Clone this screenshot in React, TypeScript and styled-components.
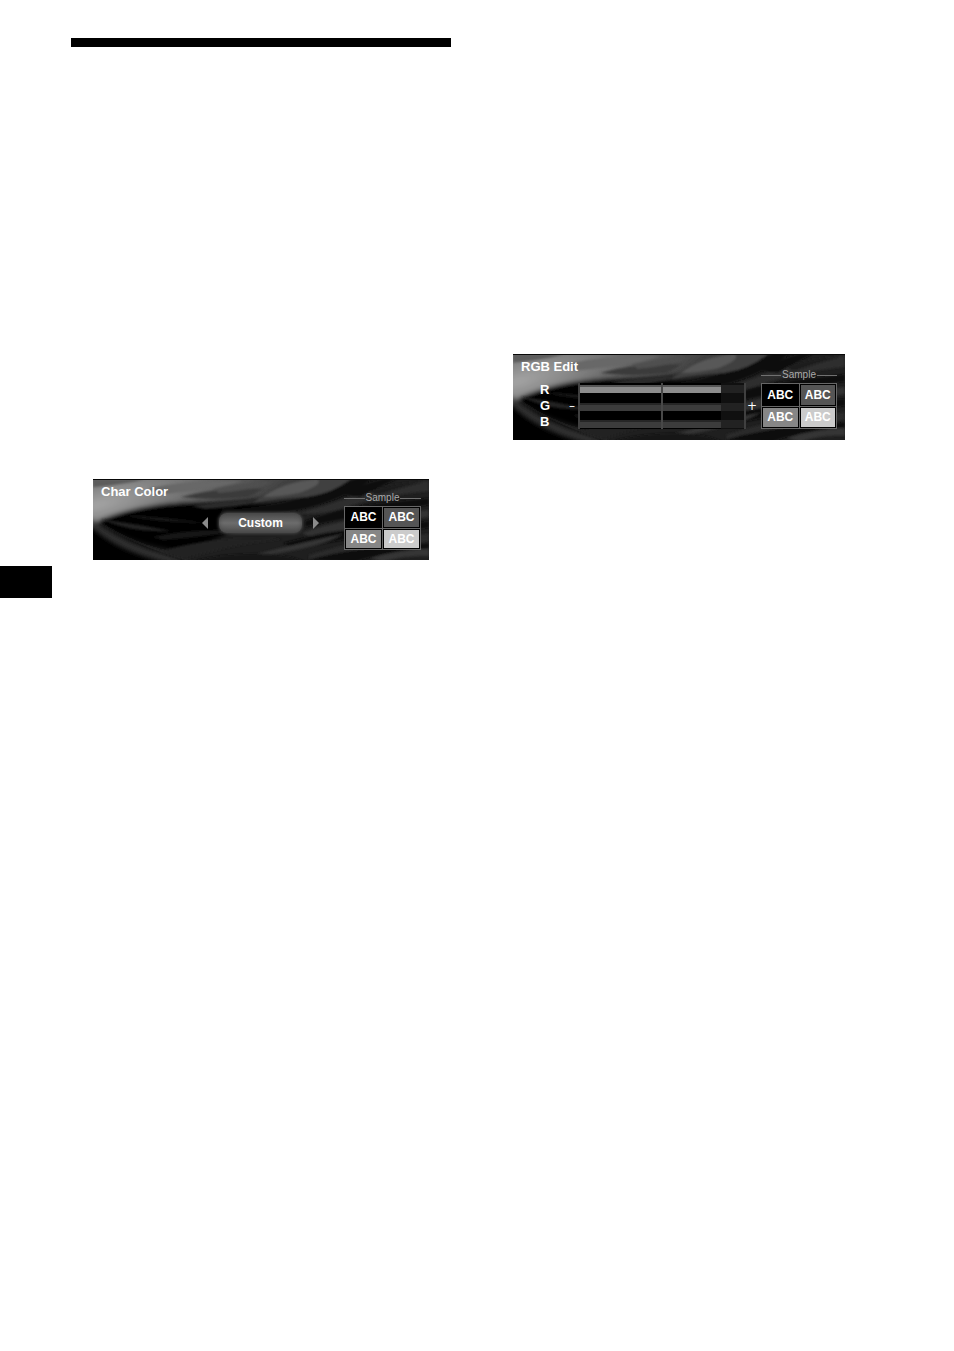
import React, { useState } from 'react';
import styled, { createGlobalStyle } from 'styled-components';

const GlobalStyle = createGlobalStyle`
  * { box-sizing: border-box; }
  body { margin: 0; background: #fff; }
`;

const Page = styled.main`
  display: grid;
  grid-template-columns: 71px minmax(0, 1fr) minmax(0, 1fr);
  padding-right: 83px;
  min-height: 100vh;
  align-items: start;
`;

const PageTab = styled.div`
  width: 52px;
  height: 32px;
  margin-top: 566px;
  background: #000;
`;

const LeftColumn = styled.section`
  padding-top: 38px;
  margin-right: 20px;
`;

const RightColumn = styled.section`
  padding-top: 354px;
  margin-left: 20px;
`;

const Rule = styled.hr`
  height: 9px;
  margin: 0 0 432px;
  border: 0;
  background: #000;
`;

const Panel = styled.form<{ $height: number; $inset: number }>`
  position: relative;
  display: flex;
  justify-content: space-between;
  height: ${(p) => p.$height}px;
  margin: 0 ${(p) => p.$inset}px 0 22px;
  padding-right: 8px;
  overflow: hidden;
  background: #0a0a0a;
  color: #fff;
  font-family: 'Liberation Sans', Arial, sans-serif;
`;

const Backdrop = styled.svg`
  position: absolute;
  inset: 0;
  width: 100%;
  height: 100%;
`;

const PanelBody = styled.div`
  position: relative;
  display: flex;
  flex: 1;
  flex-direction: column;
`;

const Title = styled.h2`
  margin: 0;
  padding: 5px 0 0 8px;
  font-size: 13px;
  font-weight: 700;
  line-height: 16px;
`;

const Picker = styled.div`
  display: flex;
  align-items: center;
  align-self: flex-end;
  gap: 11px;
  height: 22px;
  margin: 12px 25px 0 0;
`;

const ArrowButton = styled.button`
  display: flex;
  width: 6px;
  height: 12px;
  padding: 0;
  border: 0;
  background: none;
`;

const PickerValue = styled.output`
  width: 83px;
  height: 20px;
  border-radius: 8px;
  background: linear-gradient(#4c4c4c, #6c6c6c 50%, #4c4c4c);
  box-shadow: 0 0 3px 1px #444, inset 0 0 4px #444;
  font-size: 12px;
  font-weight: 700;
  line-height: 20px;
  text-align: center;
`;

const SampleBox = styled.fieldset<{ $top: number; $width: number }>`
  position: relative;
  display: flex;
  flex-direction: column;
  gap: 2px;
  min-width: 0;
  width: ${(p) => p.$width}px;
  margin: 0;
  padding: ${(p) => p.$top}px 0 0;
  border: 0;
`;

const SampleLabel = styled.div`
  display: flex;
  align-items: center;
  gap: 1px;
  color: #aaa;
  font-size: 10px;
  line-height: 12px;

  &::before,
  &::after {
    content: '';
    flex: 1;
    height: 1px;
    background: #707070;
  }
`;

const Swatches = styled.div<{ $height: number }>`
  display: grid;
  grid-template-columns: 1fr 1fr;
  grid-template-rows: 1fr 1fr;
  gap: 1px;
  height: ${(p) => p.$height}px;
  border: 1px solid #666;
  background: #666;
`;

const Swatch = styled.span<{ $tone: string }>`
  display: flex;
  align-items: center;
  justify-content: center;
  border: 1px solid #000;
  background: ${(p) => p.$tone};
  font-size: 12px;
  font-weight: 700;
  line-height: 16px;
`;

const Mixer = styled.div`
  display: flex;
  align-items: center;
  height: 46px;
  margin: 8px 3px 0 27px;
`;

const ChannelNames = styled.div`
  display: flex;
  flex-direction: column;
  width: 26px;
  font-size: 13px;
  font-weight: 700;
  line-height: 16px;
`;

const Sign = styled.span`
  width: 12px;
  font-family: 'DejaVu Sans', sans-serif;
  font-size: 12px;
  line-height: 14px;
  text-align: center;
`;

const Tracks = styled.div`
  position: relative;
  display: flex;
  flex: 1;
  flex-direction: column;
  justify-content: space-between;
  height: 46px;
  padding: 2px 0 1px;
  border: solid #404040;
  border-width: 0 2px;
  background: linear-gradient(90deg, #000 86%, #101010 86%);

  &::after {
    content: '';
    position: absolute;
    top: 0;
    bottom: 0;
    left: 50%;
    width: 2px;
    margin-left: -1px;
    background: #484848;
  }
`;

const Slider = styled.input<{ $active: boolean; $level: number }>`
  appearance: none;
  display: block;
  width: 100%;
  height: 8px;
  margin: 0;
  background:
    linear-gradient(90deg, transparent ${(p) => p.$level}%, #222 ${(p) => p.$level}%),
    linear-gradient(
      ${(p) => (p.$active ? '#555 2px, #8c8c8c 2px' : '#262626 2px, #3c3c3c 2px')}
    );

  &::-webkit-slider-thumb {
    appearance: none;
    width: 2px;
    height: 8px;
  }
`;

function Waves({ id }: { id: string }) {
  return (
    <Backdrop viewBox="0 0 336 81" preserveAspectRatio="none" aria-hidden="true">
      <defs>
        <radialGradient
          id={`${id}-glow`}
          gradientUnits="userSpaceOnUse"
          cx="0"
          cy="0"
          r="1"
          gradientTransform="translate(4 26) rotate(-14) scale(220 60)"
        >
          <stop offset="0" stopColor="#a4a4a4" />
          <stop offset="0.25" stopColor="#888" />
          <stop offset="0.5" stopColor="#686868" />
          <stop offset="1" stopColor="#3c3c3c" />
        </radialGradient>
        <filter id={`${id}-soft`} x="-10%" y="-20%" width="120%" height="140%">
          <feGaussianBlur stdDeviation="2" />
        </filter>
        <filter id={`${id}-edge`} x="-10%" y="-20%" width="120%" height="140%">
          <feGaussianBlur stdDeviation="0.9" />
        </filter>
      </defs>
      <rect width="336" height="81" fill="#1f1f1f" />
      <path d="M0 40 Q30 62 92 81 H0Z" fill="#000" />
      <g filter={`url(#${id}-soft)`}>
        <path d="M-6 -6 H244 L214 12 Q170 20 130 22 Q70 22 36 32 Q16 38 2 46 L-6 50Z" fill={`url(#${id}-glow)`} />
        <path d="M4 42 Q46 24 102 23 Q146 24 190 28 L150 46 Q130 58 92 73 Q36 66 4 42Z" fill="#050505" />
        <path d="M-2 39 Q22 58 54 69 Q80 76 100 84 H74 Q24 72 -2 48Z" fill="#2e2e2e" />
      </g>
      <g filter={`url(#${id}-edge)`}>
        <path d="M0 0 H52 Q34 5 0 8Z" fill="#5c5c5c" />
        <path d="M56 9 Q100 0 150 2 Q116 11 62 16Z" fill="#686868" />
        <path d="M88 18 Q124 8 170 10 L156 18 Q120 22 88 18Z" fill="#3a3a3a" />
        <path d="M120 10 Q150 3 180 3 Q160 11 126 14Z" fill="#505050" />
        <path d="M98 27 Q136 20 170 21 Q150 28 112 30Z" fill="#2a2a2a" />
        <path d="M8 40 Q44 45 78 52 Q38 54 8 40Z" fill="#222" />
        <path d="M30 36 Q74 38 112 44 Q66 44 30 36Z" fill="#191919" />
        <path d="M60 58 Q98 49 146 52 Q110 58 70 61Z" fill="#181818" />
        <path d="M66 73 Q118 56 190 60 Q134 66 92 80Z" fill="#232323" />
        <path d="M130 30 Q170 30 214 17 Q250 4 268 -2 L282 -2 Q250 22 206 31 Q160 40 126 36Z" fill="#0c0c0c" />
        <path d="M160 24 Q180 5 218 -2 H260 Q242 14 214 18 Q184 20 160 24Z" fill="#404040" />
        <path d="M170 18 Q190 3 224 0 Q232 5 206 14 Q186 18 170 18Z" fill="#585858" />
        <path d="M204 34 Q234 27 268 14 Q298 4 336 2 V12 Q284 17 248 30 Q222 37 204 34Z" fill="#2e2e2e" />
        <path d="M250 16 Q270 4 290 0 H304 Q284 9 268 18Z" fill="#101010" />
        <path d="M276 12 Q300 4 330 3 Q306 9 284 16Z" fill="#1a1a1a" />
        <path d="M212 42 Q254 26 300 23 L336 19 V26 Q266 36 212 48Z" fill="#111" />
        <path d="M208 54 Q250 38 336 31 V38 Q266 46 220 59Z" fill="#303030" />
        <path d="M190 64 Q236 51 280 48 L336 42 V49 Q262 58 200 70Z" fill="#0e0e0e" />
        <path d="M160 76 Q206 64 250 55 Q230 68 174 76Z" fill="#343434" />
        <path d="M216 76 Q268 59 336 55 V62 Q282 67 236 81 H216Z" fill="#2c2c2c" />
        <path d="M214 81 Q252 71 292 68 L336 64 V69 Q286 74 262 83Z" fill="#0c0c0c" />
        <path d="M278 79 Q308 70 336 70 V77 Q310 76 290 83Z" fill="#363636" />
        <path d="M104 81 Q156 70 198 78 L214 83 H104Z" fill="#141414" />
      </g>
      <path d="M0 .5 H336" stroke="#080808" />
    </Backdrop>
  );
}

const sampleTones = ['#000', '#555', '#868686', '#cbcbcb'];

function Sample({ top, width, height }: { top: number; width: number; height: number }) {
  return (
    <SampleBox $top={top} $width={width} aria-label="Sample">
      <SampleLabel>Sample</SampleLabel>
      <Swatches $height={height}>
        {sampleTones.map((tone) => (
          <Swatch key={tone} $tone={tone}>ABC</Swatch>
        ))}
      </Swatches>
    </SampleBox>
  );
}

const channels = ['R', 'G', 'B'];

export default function App() {
  const [levels, setLevels] = useState([86, 86, 86]);

  return (
    <>
      <GlobalStyle />
      <Page>
        <PageTab />
        <LeftColumn>
          <Rule />
          <Panel $height={81} $inset={22}>
            <Waves id="char" />
            <PanelBody>
              <Title>Char Color</Title>
              <Picker>
                <ArrowButton type="button" aria-label="Previous color">
                  <svg width="6" height="12" viewBox="0 0 6 12"><path d="M6 0V12L0 6Z" fill="#8a8a8a" /></svg>
                </ArrowButton>
                <PickerValue>Custom</PickerValue>
                <ArrowButton type="button" aria-label="Next color">
                  <svg width="6" height="12" viewBox="0 0 6 12"><path d="M0 0V12L6 6Z" fill="#8a8a8a" /></svg>
                </ArrowButton>
              </Picker>
            </PanelBody>
            <Sample top={13} width={77} height={44} />
          </Panel>
        </LeftColumn>
        <RightColumn>
          <Panel $height={86} $inset={26}>
            <Waves id="rgb" />
            <PanelBody>
              <Title>RGB Edit</Title>
              <Mixer>
                <ChannelNames>
                  {channels.map((name) => (
                    <label key={name} htmlFor={`channel-${name}`}>{name}</label>
                  ))}
                </ChannelNames>
                <Sign>–</Sign>
                <Tracks>
                  {channels.map((name, i) => (
                    <Slider
                      key={name}
                      id={`channel-${name}`}
                      type="range"
                      $active={i === 0}
                      $level={levels[i]}
                      value={levels[i]}
                      onChange={(e) =>
                        setLevels(levels.map((v, j) => (j === i ? Number(e.target.value) : v)))
                      }
                    />
                  ))}
                </Tracks>
                <Sign>+</Sign>
              </Mixer>
            </PanelBody>
            <Sample top={15} width={76} height={46} />
          </Panel>
        </RightColumn>
      </Page>
    </>
  );
}
